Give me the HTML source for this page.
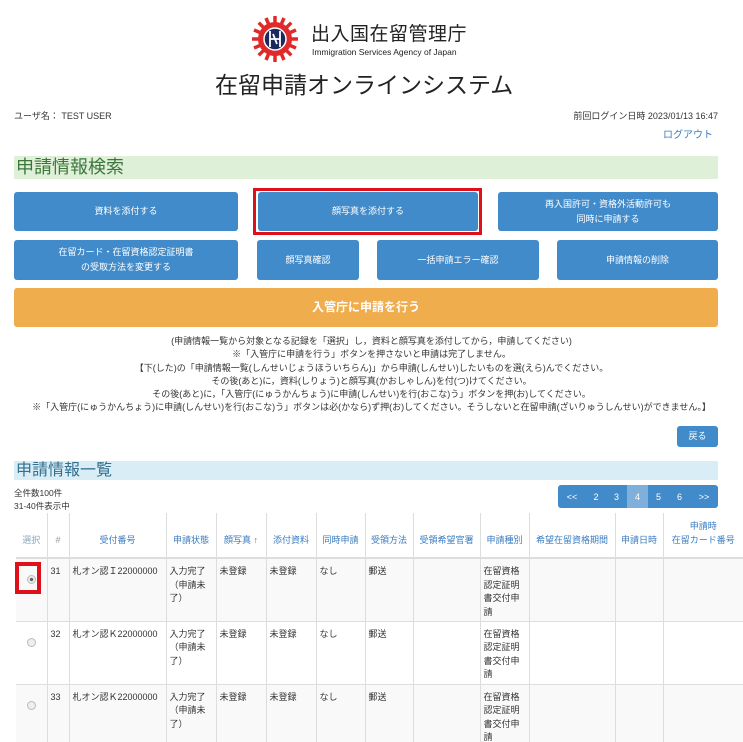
<!DOCTYPE html>
<html><head><meta charset="utf-8"><style>
*{margin:0;padding:0;box-sizing:border-box}
html,body{width:743px;height:742px;overflow:hidden}
body{background:#fff;font-family:"Liberation Sans","Noto Sans CJK JP",sans-serif;color:#333;position:relative}
.a{position:absolute;white-space:nowrap}
.btn{position:absolute;background:#428bca;color:#fff;font-size:9px;display:flex;align-items:center;justify-content:center;text-align:center;line-height:15px;border-radius:3px}
table{border-collapse:collapse;position:absolute;left:16px;top:513px;table-layout:fixed;font-size:9px;width:727px}
td,th{border-left:1px solid #ddd;vertical-align:top;padding:6px 3px 1px;line-height:13.5px;white-space:nowrap;overflow:hidden}
th{font-weight:normal;color:#3a7cc0;vertical-align:bottom;text-align:center;height:45px;padding:4px 1px 10px;border-bottom:2px solid #ddd}
td{border-top:1px solid #ddd;height:63px}
tr.g td{background:#f9f9f9}
.pg{position:absolute;top:485px;height:23px;background:#428bca;color:#fff;font-size:9px;display:flex;align-items:center;justify-content:center}
.rad{display:inline-block;width:9px;height:9px;border:1px solid #bbb;border-radius:50%;background:#eee;margin-top:10px}
</style></head><body>
<svg class="a" style="left:251px;top:15px" width="48" height="48" viewBox="0 0 48 48">
<g fill="#e02a2a">
<circle cx="24" cy="24" r="17"/>
<g stroke="#e02a2a" stroke-width="3.5">
<line x1="24" y1="1" x2="24" y2="47"/><line x1="1" y1="24" x2="47" y2="24"/>
<line x1="7.7" y1="7.7" x2="40.3" y2="40.3"/><line x1="40.3" y1="7.7" x2="7.7" y2="40.3"/>
<line x1="15" y1="3" x2="33" y2="45"/><line x1="33" y1="3" x2="15" y2="45"/>
<line x1="3" y1="15" x2="45" y2="33"/><line x1="3" y1="33" x2="45" y2="15"/>
</g></g>
<circle cx="24" cy="24" r="11" fill="#1b2a5e" stroke="#fff" stroke-width="1.5"/>
<path d="M19 16v16M29 16v16M19 24h10M22 19l4 10" stroke="#fff" stroke-width="1.8" fill="none"/>
</svg>
<div class="a" style="left:311px;top:19px;font-size:19px;color:#222;letter-spacing:.5px">出入国在留管理庁</div>
<div class="a" style="left:312px;top:47px;font-size:8.5px;color:#222">Immigration Services Agency of Japan</div>
<div class="a" style="left:215px;top:66px;font-size:23px;color:#222">在留申請オンラインシステム</div>
<div class="a" style="left:14px;top:109px;font-size:9px">ユーザ名： TEST USER</div>
<div class="a" style="right:25px;top:109px;font-size:9px">前回ログイン日時 2023/01/13 16:47</div>
<div class="a" style="right:30px;top:126px;font-size:10px;color:#3a7cc0">ログアウト</div>
<div class="a" style="left:14px;top:156px;width:704px;height:23px;background:#dff0d8;color:#3c763d;font-size:18px;line-height:23px;padding-left:2px">申請情報検索</div>
<div class="btn" style="left:14px;top:192px;width:224px;height:39px">資料を添付する</div>
<div class="a" style="left:253px;top:188px;width:229px;height:47px;border:3px solid #e0101a"></div>
<div class="btn" style="left:258px;top:192px;width:220px;height:39px">顔写真を添付する</div>
<div class="btn" style="left:498px;top:192px;width:220px;height:39px">再入国許可・資格外活動許可も<br>同時に申請する</div>
<div class="btn" style="left:14px;top:240px;width:224px;height:40px">在留カード・在留資格認定証明書<br>の受取方法を変更する</div>
<div class="btn" style="left:257px;top:240px;width:102px;height:40px">顔写真確認</div>
<div class="btn" style="left:377px;top:240px;width:162px;height:40px">一括申請エラー確認</div>
<div class="btn" style="left:557px;top:240px;width:161px;height:40px">申請情報の削除</div>
<div class="btn" style="left:14px;top:288px;width:704px;height:39px;background:#f0ad4e;font-size:12px;font-weight:bold">入管庁に申請を行う</div>
<div class="a" style="left:0;top:335px;width:743px;text-align:center;font-size:9px;line-height:13.3px;color:#333">(申請情報一覧から対象となる記録を「選択」し，資料と顔写真を添付してから，申請してください)<br>※「入管庁に申請を行う」ボタンを押さないと申請は完了しません。<br>【下(した)の「申請情報一覧(しんせいじょうほういちらん)」から申請(しんせい)したいものを選(えら)んでください。<br>その後(あと)に，資料(しりょう)と顔写真(かおしゃしん)を付(つ)けてください。<br>その後(あと)に，「入管庁(にゅうかんちょう)に申請(しんせい)を行(おこな)う」ボタンを押(お)してください。<br>※「入管庁(にゅうかんちょう)に申請(しんせい)を行(おこな)う」ボタンは必(かなら)ず押(お)してください。そうしないと在留申請(ざいりゅうしんせい)ができません。】</div>
<div class="btn" style="left:677px;top:426px;width:41px;height:21px;font-size:9px">戻る</div>
<div class="a" style="left:14px;top:461px;width:704px;height:19px;background:#d9edf7;color:#31708f;font-size:16px;line-height:19px;padding-left:2px">申請情報一覧</div>
<div class="a" style="left:14px;top:487px;font-size:8.5px;line-height:13px">全件数100件<br>31-40件表示中</div>
<div class="pg" style="left:558px;width:28px;border-radius:3px 0 0 3px">&lt;&lt;</div>
<div class="pg" style="left:586px;width:20px">2</div>
<div class="pg" style="left:606px;width:21px">3</div>
<div class="pg" style="left:627px;width:21px;background:#7fb0dc">4</div>
<div class="pg" style="left:648px;width:21px">5</div>
<div class="pg" style="left:669px;width:21px">6</div>
<div class="pg" style="left:690px;width:28px;border-radius:0 3px 3px 0">&gt;&gt;</div>
<table>
<colgroup><col style="width:31px"><col style="width:22px"><col style="width:97px"><col style="width:50px"><col style="width:50px"><col style="width:50px"><col style="width:49px"><col style="width:48px"><col style="width:67px"><col style="width:49px"><col style="width:86px"><col style="width:48px"><col style="width:80px"></colgroup>
<tr><th style="border-left:none;color:#8ab">選択</th><th style="color:#999">#</th><th>受付番号</th><th>申請状態</th><th>顔写真 <b>↑</b></th><th>添付資料</th><th>同時申請</th><th>受領方法</th><th>受領希望官署</th><th>申請種別</th><th>希望在留資格期間</th><th>申請日時</th><th>申請時<br>在留カード番号</th></tr>
<tr class="g"><td style="border-left:none;text-align:center"><span class="rad" style="background:radial-gradient(#666 30%,#eee 40%)"></span></td><td>31</td><td>札オン認Ｉ22000000</td><td>入力完了<br>（申請未<br>了）</td><td>未登録</td><td>未登録</td><td>なし</td><td>郵送</td><td></td><td>在留資格<br>認定証明<br>書交付申<br>請</td><td></td><td></td><td></td></tr>
<tr><td style="border-left:none;text-align:center"><span class="rad"></span></td><td>32</td><td>札オン認Ｋ22000000</td><td>入力完了<br>（申請未<br>了）</td><td>未登録</td><td>未登録</td><td>なし</td><td>郵送</td><td></td><td>在留資格<br>認定証明<br>書交付申<br>請</td><td></td><td></td><td></td></tr>
<tr class="g"><td style="border-left:none;text-align:center"><span class="rad"></span></td><td>33</td><td>札オン認Ｋ22000000</td><td>入力完了<br>（申請未<br>了）</td><td>未登録</td><td>未登録</td><td>なし</td><td>郵送</td><td></td><td>在留資格<br>認定証明<br>書交付申<br>請</td><td></td><td></td><td></td></tr>
</table>
<div class="a" style="left:15px;top:562px;width:26px;height:32px;border:4px solid #e0101a"></div>
</body></html>
